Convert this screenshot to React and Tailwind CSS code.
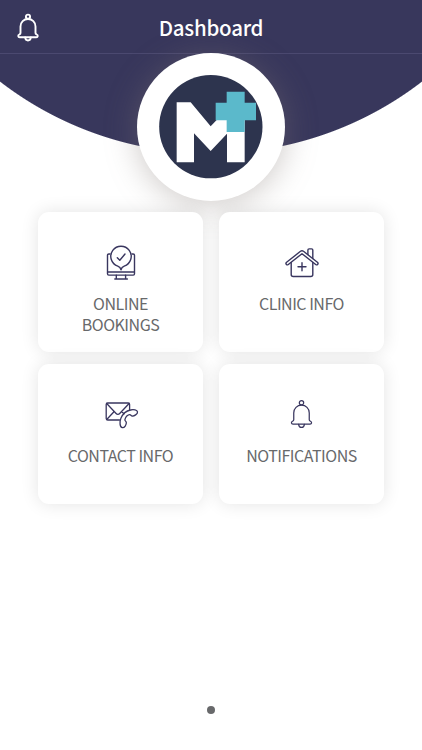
import React from 'react';

function BellIcon({ className, strokeWidth }) {
  return (
    <svg viewBox="0 0 22 30" fill="none" stroke="currentColor" strokeWidth={strokeWidth} strokeLinecap="round" strokeLinejoin="round" className={className}>
      <circle cx="11" cy="3.7" r="2.1" />
      <path d="M3.5 20V13.5C3.5 9 6.800 6 11 6s7.500 3 7.500 7.500V20c0 1 .5 1.200 1.200 1.500 1.600.7 1.300 2.800-.4 2.800H2.700C1 24.300.7 22.200 2.300 21.500 3 21.200 3.500 21 3.500 20Z" />
      <path d="M8.200 24.500c.2 1.900 1.300 3 2.800 3s2.600-1.100 2.800-3" />
    </svg>
  );
}

function BookingIcon() {
  return (
    <svg viewBox="0 0 30 36" fill="none" stroke="currentColor" strokeWidth="1.4" strokeLinecap="round" strokeLinejoin="round" className="h-9 w-[30px]">
      <path d="M4 9H2.800C2 9 1.500 9.500 1.500 10.300v18.500c0 .8.5 1.300 1.300 1.300h24.400c.8 0 1.300-.5 1.300-1.300V10.300c0-.8-.5-1.300-1.300-1.300H26" />
      <path d="M1.800 27h26.400M10.300 30.300v3.500M19.600 30.300v3.500M8.800 34h12.600" />
      <path d="M15 24.800c-.4-1.900-1.300-3-3.200-3.700A10.200 10.200 0 1 1 18.200 21.100c-1.900.7-2.800 1.800-3.200 3.700Z" />
      <path d="m11.300 12.700 2.500 2.500 5.200-6.200" />
    </svg>
  );
}

function ClinicIcon() {
  return (
    <svg viewBox="0 0 34 32" fill="none" stroke="currentColor" strokeWidth="1.400" strokeLinecap="round" strokeLinejoin="round" className="h-8 w-[34px]">
      <path d="M15.500 4.300 1.600 15.300c-.7.600-.8 1.400-.3 2 .5.600 1.300.7 2 .2L17 6.700l13.700 10.800c.7.500 1.500.4 2-.2s.4-1.400-.3-2L18.500 4.300c-1-.8-2-.8-3 0Z" />
      <path d="M6.200 15.500v12c0 1.400.7 2 2 2h17.600c1.300 0 2-.6 2-2v-12" />
      <path d="M22.900 7.500V3.100c0-.8.500-1.200 1.200-1.200h2.500c.7 0 1.200.4 1.200 1.200v8.500" />
      <path d="M17 15.800v8M13 19.800h8" />
    </svg>
  );
}

function ContactIcon() {
  return (
    <svg viewBox="0 0 34 28" fill="none" stroke="currentColor" strokeWidth="1.300" strokeLinecap="round" strokeLinejoin="round" className="ml-[3px] h-7 w-[34px]">
      <path d="M14.500 19H2.600c-.9 0-1.400-.5-1.400-1.400V3.400C1.200 2.500 1.700 2 2.600 2h20.600c.9 0 1.400.5 1.400 1.400v5.300" />
      <path d="m1.700 2.500 9.400 10c1 1.100 2.600 1.100 3.600 0l9.400-10M1.700 18.500l7.500-8M16.500 10.500l2.500 2.300" />
      <path d="M15.900 17.200c2.100-4.700 5.300-7.300 9.600-8.200 3-.7 6.700-.1 7 1.800.3 2.100-3.500 4.700-5.500 4.200-1.200-.3-1.300-1.700-2.600-1.300-2.200.6-3.900 2.700-4.500 4.900-.3 1.400 1.200 1.500 1.400 2.800.3 2.400-1.900 5.600-3.900 5.300-2.700-.5-3-6-1.500-9.500Z" />
    </svg>
  );
}

function Logo() {
  return (
    <svg viewBox="21 24 444 444" className="size-[148px]">
      <circle cx="242.500" cy="245" r="155" fill="#2d344e" />
      <path fill="#fff" d="M140 172h42l60 72 18-19h84v127h-53v-86l-49 52-50-53v87h-52Z" />
      <path fill="#5bb9cb" d="M290 140h54v33h34v53h-34v35h-54v-35h-33v-53h33Z" />
    </svg>
  );
}

function Card({ icon, children }) {
  return (
    <button className="flex h-[140px] flex-col items-center rounded-[11px] bg-white pt-[31px] text-[#68696b] shadow-[0_0_18px_rgba(0,0,0,0.11)]">
      <span className="flex h-[40px] items-center justify-center text-[#39365f]">{icon}</span>
      <span className="mt-[10px] w-[114px] text-center text-[16px] leading-[21px] tracking-[-0.5px]">{children}</span>
    </button>
  );
}

export default function App() {
  return (
    <div className="flex h-[750px] w-full flex-col overflow-hidden bg-white bg-[radial-gradient(circle_346px_at_50%_-192px,#38375c_345px,#ffffff_346px)] font-['Noto_Sans_CJK_SC',sans-serif]">
      <header className="grid h-[54px] shrink-0 grid-cols-[1fr_auto_1fr] items-center border-b border-[#4b4970] bg-[#38375c] px-[17px] pt-[2px] text-white">
        <BellIcon className="h-[30px] w-[22px]" strokeWidth="1.900" />
        <h1 className="-mt-px text-[20.5px] leading-none font-medium tracking-[-0.25px]">Dashboard</h1>
      </header>
      <main className="flex flex-col items-center">
        <div className="-mt-px size-[148px] rounded-full bg-white shadow-[0_4px_32px_rgba(130,120,115,0.4)]">
          <Logo />
        </div>
        <div className="mt-[11px] grid grid-cols-[164.5px_164.5px] gap-x-[16.5px] gap-y-[12px]">
          <Card icon={<BookingIcon />}>ONLINE BOOKINGS</Card>
          <Card icon={<ClinicIcon />}>CLINIC INFO</Card>
          <Card icon={<ContactIcon />}>CONTACT INFO</Card>
          <Card icon={<BellIcon className="-mt-[2px] h-[31px] w-[23px]" strokeWidth="1.200" />}>NOTIFICATIONS</Card>
        </div>
      </main>
      <footer className="mt-auto flex justify-center pb-[36px]">
        <span className="size-2 rounded-full bg-[#68696b]" />
      </footer>
    </div>
  );
}
